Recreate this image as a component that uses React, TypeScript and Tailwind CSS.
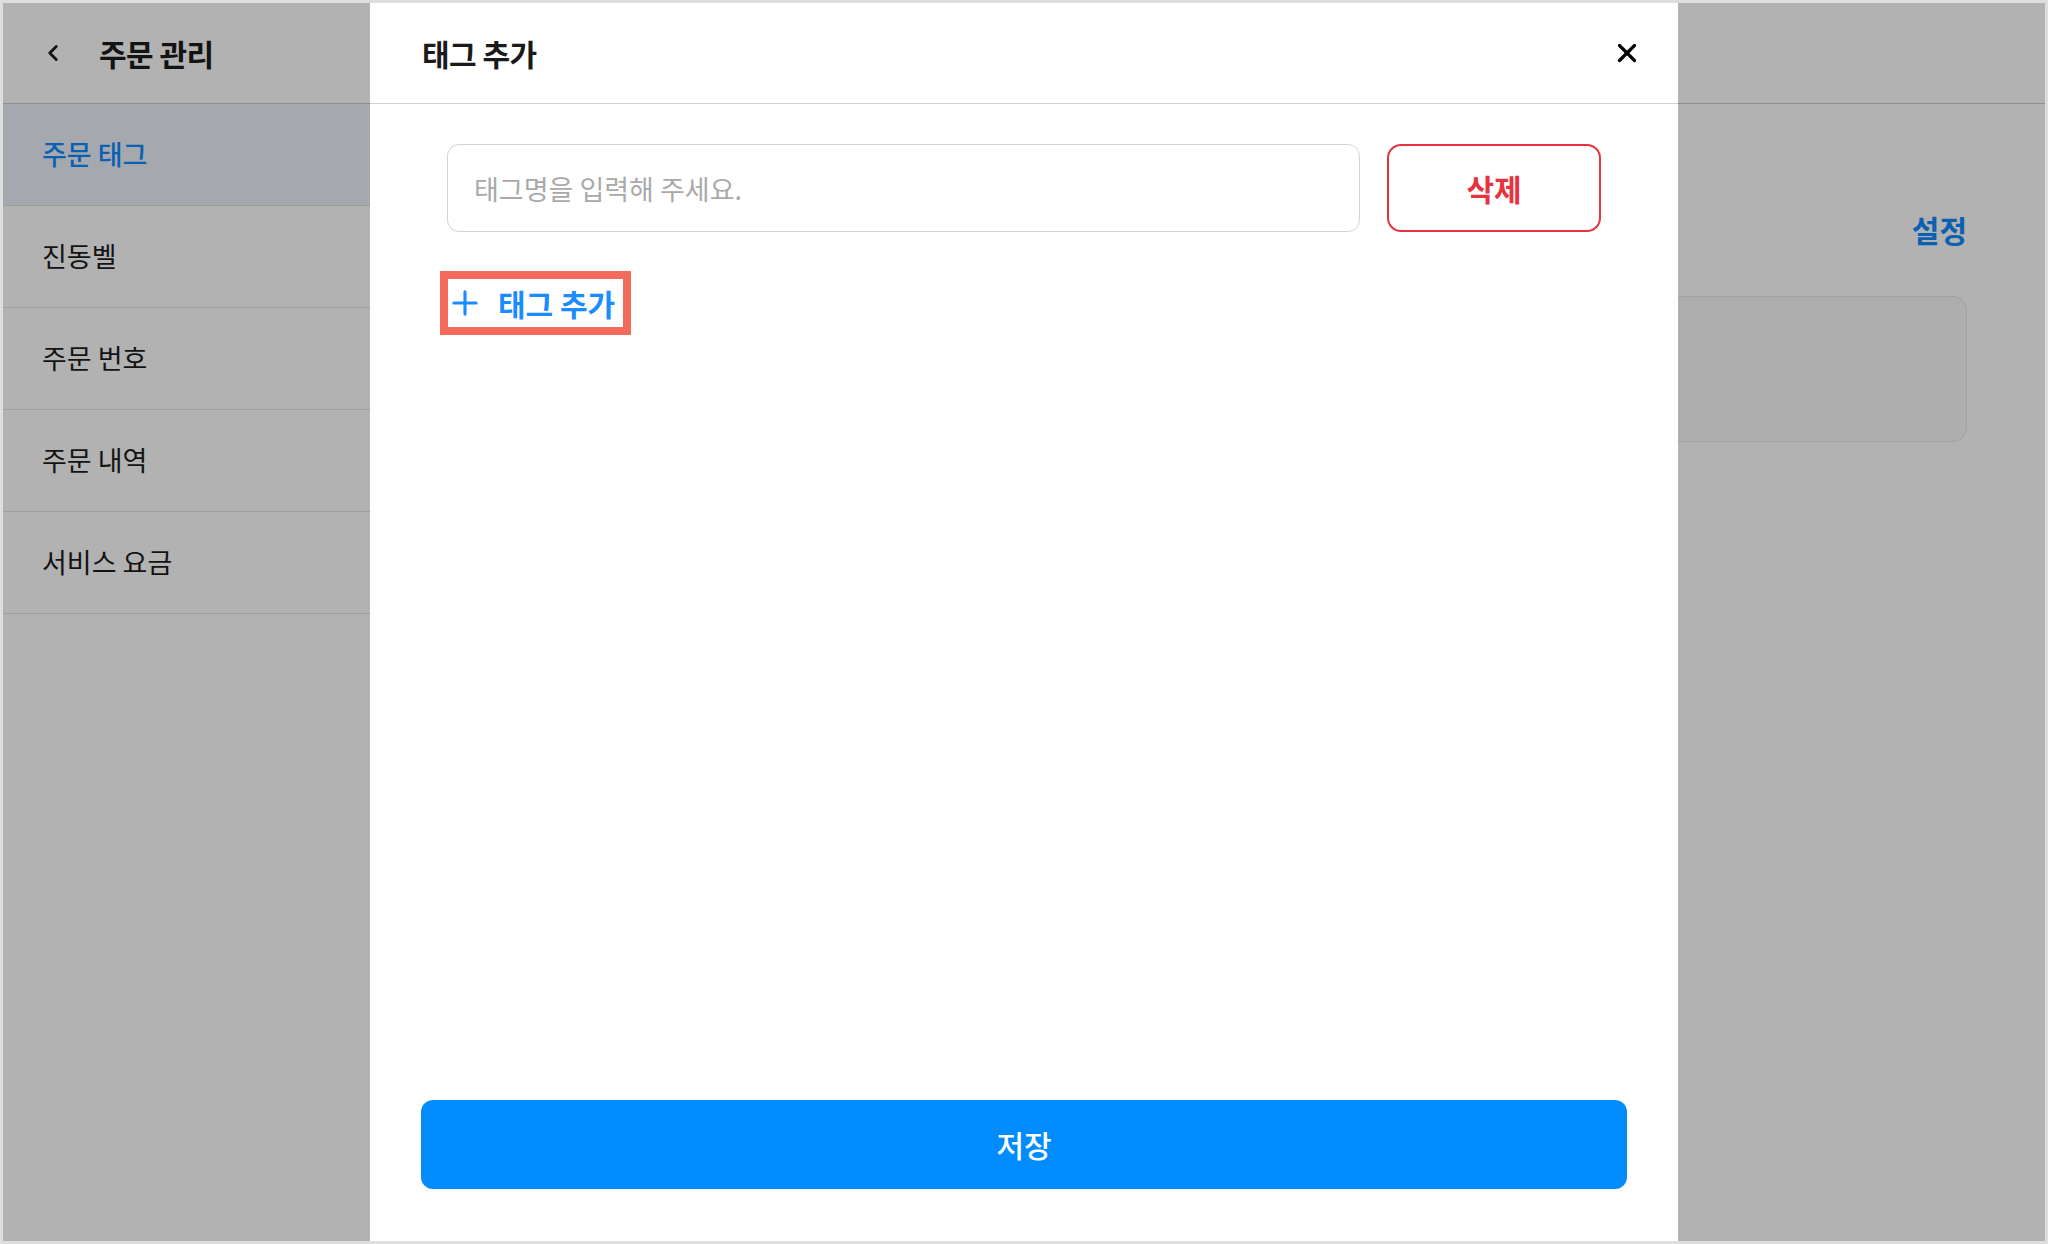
import { ChevronLeft, X, Plus } from "lucide-react";

const menuItems = ["주문 태그", "진동벨", "주문 번호", "주문 내역", "서비스 요금"];

const App = () => {
  return (
    <div className="w-[2048px] h-[1244px] border-[3px] border-[#dedede] bg-white font-['Noto_Sans_CJK_KR',sans-serif] text-[#1c1c1c]">
      <div className="relative w-full h-full flex flex-col overflow-hidden">
        {/* underlying page */}
        <header className="h-[101px] shrink-0 flex items-center border-b border-[#cccccc]">
          <div className="flex items-center pl-[37px]">
            <ChevronLeft className="w-[26px] h-[26px]" strokeWidth={2.6} />
            <h1 className="ml-[33px] text-[30px] font-bold tracking-[-0.5px]">주문 관리</h1>
          </div>
        </header>

        <div className="flex flex-1">
          <nav className="w-[367px] shrink-0">
            {menuItems.map((item, i) => (
              <div
                key={item}
                className={
                  i === 0
                    ? "h-[102px] flex items-center pl-[39px] border-b border-[#e2e2e2] bg-[#edf3fb] text-[#0f8cff] text-[27px] font-medium"
                    : "h-[102px] flex items-center pl-[39px] border-b border-[#e2e2e2] text-[27px]"
                }
              >
                {item}
              </div>
            ))}
          </nav>

          <main className="flex-1 flex flex-col items-end pr-[78px] pt-[103px]">
            <span className="text-[30px] font-semibold text-[#0f8cff]">설정</span>
            <div className="mt-[44px] w-full h-[146px] rounded-[14px] border border-[#e8e8e8] bg-[#f9f9fb]" />
          </main>
        </div>

        {/* dim overlay */}
        <div className="absolute inset-0 bg-black/30" />

        {/* tag modal */}
        <section className="absolute top-0 bottom-0 left-[367px] w-[1308px] bg-white flex flex-col">
          <div className="h-[101px] shrink-0 flex items-center justify-between pl-[52px] pr-[36px] border-b border-[#d1d1d1]">
            <h2 className="text-[30px] font-bold tracking-[-0.5px] text-[#1a1a1a]">태그 추가</h2>
            <X className="w-[30px] h-[30px] text-black" strokeWidth={2.6} />
          </div>

          <div className="flex-1 flex flex-col px-[77px] pt-[40px]">
            <div className="flex gap-[27px]">
              <input
                readOnly
                placeholder="태그명을 입력해 주세요."
                className="flex-1 h-[88px] rounded-[12px] border border-[#d3d3d3] px-[26px] text-[27px] placeholder:text-[#a9a9a9] outline-none"
              />
              <button className="w-[214px] h-[88px] rounded-[14px] border-2 border-[#e7333f] text-[#e7333f] text-[30px] font-semibold">
                삭제
              </button>
            </div>

            <div className="mt-[47px] ml-px self-start flex items-center h-[48px] pr-[8px] outline-[8px] outline-solid outline-[#f36b5c] text-[#1a8cff]">
              <Plus className="-ml-[2px] w-[38px] h-[38px]" strokeWidth={2} />
              <span className="ml-[14px] text-[30px] font-semibold">태그 추가</span>
            </div>
          </div>

          <button className="mx-[51px] mb-[52px] h-[89px] rounded-[12px] bg-[#008cff] text-white text-[30px] font-medium">
            저장
          </button>
        </section>
      </div>
    </div>
  );
};

export default App;
